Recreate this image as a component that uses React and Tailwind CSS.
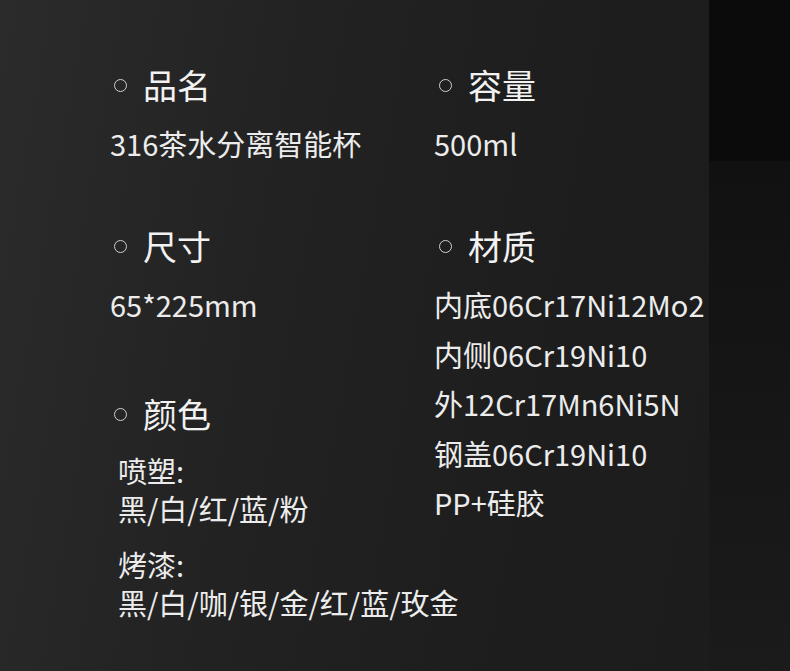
const font = { fontFamily: '"Noto Sans CJK SC", "Noto Sans", sans-serif' }

function Heading({ children, right }) {
  return (
    <div className="flex items-center h-[34px] text-[34px] leading-[34px] text-[#f2f2f2]">
      <span
        className={`${right ? 'ml-[5px]' : 'ml-[4px]'} w-[13px] h-[13px] rounded-full border border-[#cfcfcf] shrink-0`}
      />
      <span className="ml-[16px]">{children}</span>
    </div>
  )
}

export default function App() {
  const materials = [
    '内底06Cr17Ni12Mo2',
    '内侧06Cr19Ni10',
    '外12Cr17Mn6Ni5N',
    '钢盖06Cr19Ni10',
    'PP+硅胶',
  ]

  return (
    <div
      className="relative w-[790px] h-[671px] overflow-hidden flex bg-[linear-gradient(100deg,#2b2b2b_0%,#222222_35%,#1d1d1d_70%,#1c1c1c_100%)]"
      style={font}
    >
      <div className="flex-1 flex pl-[110px] pt-[68px] text-[29px] text-[#ececec]">
        {/* left column */}
        <div className="w-[324px] flex flex-col">
          <Heading>品名</Heading>
          <div className="mt-[21px] leading-[40px]">316茶水分离智能杯</div>
          <div className="mt-[66px]">
            <Heading>尺寸</Heading>
          </div>
          <div className="mt-[21px] leading-[40px]">65*225mm</div>
          <div className="mt-[73px]">
            <Heading>颜色</Heading>
          </div>
          <div className="ml-[8px] mt-[19.5px] leading-[38px] whitespace-nowrap">
            <div>喷塑:</div>
            <div>黑/白/红/蓝/粉</div>
            <div className="mt-[18px]">烤漆:</div>
            <div>黑/白/咖/银/金/红/蓝/玫金</div>
          </div>
        </div>

        {/* right column */}
        <div className="flex flex-col">
          <Heading right>容量</Heading>
          <div className="mt-[21px] leading-[40px]">500ml</div>
          <div className="mt-[66px]">
            <Heading right>材质</Heading>
          </div>
          <div className="mt-[17px] leading-[49.5px] whitespace-nowrap">
            {materials.map((m) => (
              <div key={m}>{m}</div>
            ))}
          </div>
        </div>
      </div>

      {/* dark strip on the right */}
      <div className="w-[81px] shrink-0 flex flex-col">
        <div className="h-[161px] bg-[#0b0b0b]" />
        <div className="flex-1 bg-gradient-to-b from-[#111111] to-[#1b1b1b]" />
      </div>
    </div>
  )
}
